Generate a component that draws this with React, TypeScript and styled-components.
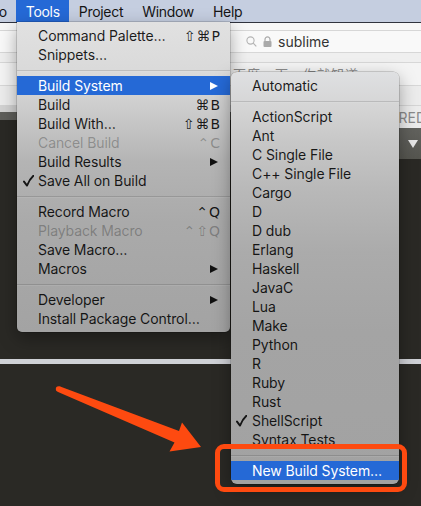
import React from "react";
import styled, { createGlobalStyle } from "styled-components";

const FONT = `Inter, "Noto Sans", "DejaVu Sans", sans-serif`;
const SYM = `"DejaVu Sans", Inter, sans-serif`;
const ORANGE = "#fe4a10";
const BLUE = "#2569d6";

const Global = createGlobalStyle`
  html, body { margin: 0; padding: 0; }
  body { background: #2a2925; font-family: ${FONT}; overflow: hidden; }
  #root { width: 421px; height: 506px; }
`;

const Screen = styled.div`
  position: relative;
  width: 421px;
  height: 506px;
  overflow: hidden;
  display: flex;
  flex-direction: column;
  background: #2a2925;
`;

/* ---------- menu bar ---------- */
const MenuBar = styled.div`
  height: 22px;
  flex: none;
  display: flex;
  align-items: stretch;
  background: #c5cee0;
  overflow: hidden;
  font-family: ${FONT};
  font-size: 14px;
  letter-spacing: -0.3px;
  color: #151515;
`;

const BarItem = styled.div<{ $active?: boolean; $clip?: boolean }>`
  display: flex;
  align-items: center;
  padding: 0 9.5px;
  margin-left: ${(p) => (p.$clip ? "-21px" : "0")};
  background: ${(p) => (p.$active ? BLUE : "transparent")};
  color: ${(p) => (p.$active ? "#fff" : "#151515")};
  white-space: nowrap;
`;

/* ---------- browser background ---------- */
const Band = styled.div<{ $h: number; $bg: string; $line?: string }>`
  flex: none;
  height: ${(p) => p.$h}px;
  background: ${(p) => p.$bg};
  border-top: 1px solid ${(p) => p.$line ?? "#d7d7d7"};
  display: flex;
  align-items: center;
  overflow: hidden;
`;

const AddressField = styled.div`
  display: flex;
  align-items: center;
  gap: 6px;
  padding-left: 246px;
  font-family: ${FONT};
  font-size: 14px;
  color: #333;
`;

const TabTitle = styled.div`
  align-self: flex-start;
  padding: 1px 0 0 233px;
  font-family: "Noto Sans CJK SC", sans-serif;
  font-size: 13px;
  color: #8c8c8c;
  white-space: nowrap;
  letter-spacing: 1px;
`;

const Workspace = styled.div`
  flex: none;
  height: 254px;
  display: grid;
  grid-template-columns: 231px 1fr;
`;

const Column = styled.div`
  display: flex;
  flex-direction: column;
  background: #2a2925;
  min-width: 0;
`;

const Block = styled.div<{ $h: number; $bg: string }>`
  flex: none;
  height: ${(p) => p.$h}px;
  background: ${(p) => p.$bg};
`;

const TitleStrip = styled.div`
  flex: none;
  height: 22px;
  display: flex;
  align-items: center;
  justify-content: flex-end;
  background: #ececec;
  border-top: 1px solid #d5d5d5;
  overflow: hidden;
  font-family: ${FONT};
  font-size: 14px;
  color: #8a8a8a;
  white-space: nowrap;
`;

const Clipped = styled.span`
  margin-right: -5px;
`;

const TabBar = styled.div`
  flex: none;
  height: 31px;
  display: flex;
  align-items: center;
  justify-content: flex-end;
  padding-right: 3px;
  background: linear-gradient(#62625e, #55554f);
`;

const DownTri = styled.span`
  width: 0;
  height: 0;
  border-left: 5px solid transparent;
  border-right: 5px solid transparent;
  border-top: 8px solid #e6e6e6;
`;

const Strip = styled.div`
  flex: none;
  height: 5px;
  background: #cfd1d6;
`;

const Editor = styled.div`
  flex: 1;
  background: #2a2925;
`;

/* ---------- menus ---------- */
const Menu = styled.div<{ $left: number; $top: number; $width: number; $bg: string; $attached?: boolean }>`
  position: absolute;
  left: ${(p) => p.$left}px;
  top: ${(p) => p.$top}px;
  width: ${(p) => p.$width}px;
  padding: 4px 0;
  border-radius: ${(p) => (p.$attached ? "0 0 5px 5px" : "6px")};
  background: ${(p) => p.$bg};
  box-shadow: 0 0 0 0.5px rgba(0, 0, 0, 0.28), 0 6px 18px rgba(0, 0, 0, 0.35);
  font-family: ${FONT};
  font-size: 14px;
  overflow: hidden;
`;

const Item = styled.div<{ $hl?: boolean; $disabled?: boolean; $pad?: number }>`
  height: 19px;
  display: grid;
  grid-template-columns: ${(p) => p.$pad ?? 21}px 1fr auto;
  align-items: center;
  padding-right: 10px;
  background: ${(p) => (p.$hl ? BLUE : "transparent")};
  color: ${(p) => (p.$hl ? "#fff" : p.$disabled ? "rgba(0,0,0,0.27)" : "rgba(0,0,0,0.88)")};
  white-space: nowrap;
  letter-spacing: -0.1px;
`;

const CheckCell = styled.span<{ $indent: number }>`
  display: flex;
  align-items: center;
  padding-left: ${(p) => p.$indent}px;
`;

const Shortcut = styled.span`
  font-family: ${SYM};
  font-size: 14px;
  letter-spacing: 1px;
  margin-right: -1px;
`;

const SubArrow = styled.span<{ $hl?: boolean }>`
  width: 0;
  height: 0;
  margin-right: 2px;
  border-top: 4.5px solid transparent;
  border-bottom: 4.5px solid transparent;
  border-left: 8px solid ${(p) => (p.$hl ? "#fff" : "#111")};
`;

const Sep = styled.div`
  height: 12px;
  display: flex;
  align-items: center;
  &::after {
    content: "";
    flex: 1;
    height: 1px;
    background: rgba(0, 0, 0, 0.13);
    box-shadow: 0 1px 0 rgba(255, 255, 255, 0.08);
  }
`;

/* ---------- annotation ---------- */
const Callout = styled.div`
  position: absolute;
  left: 215px;
  top: 444px;
  width: 182px;
  height: 38px;
  border: 5.5px solid ${ORANGE};
  border-radius: 9px;
  pointer-events: none;
`;

const Overlay = styled.svg`
  position: absolute;
  left: 0;
  top: 0;
  pointer-events: none;
`;

type Row =
  | { sep: true }
  | { label: string; key?: string; sub?: boolean; hl?: boolean; disabled?: boolean; check?: boolean };

const toolsRows: Row[] = [
  { label: "Command Palette…", key: "⇧⌘P" },
  { label: "Snippets…" },
  { sep: true },
  { label: "Build System", sub: true, hl: true },
  { label: "Build", key: "⌘B" },
  { label: "Build With…", key: "⇧⌘B" },
  { label: "Cancel Build", key: "⌃C", disabled: true },
  { label: "Build Results", sub: true },
  { label: "Save All on Build", check: true },
  { sep: true },
  { label: "Record Macro", key: "⌃Q" },
  { label: "Playback Macro", key: "⌃⇧Q", disabled: true },
  { label: "Save Macro…" },
  { label: "Macros", sub: true },
  { sep: true },
  { label: "Developer", sub: true },
  { label: "Install Package Control…" },
];

const buildRows: Row[] = [
  { label: "Automatic" },
  { sep: true },
  ...[
    "ActionScript",
    "Ant",
    "C Single File",
    "C++ Single File",
    "Cargo",
    "D",
    "D dub",
    "Erlang",
    "Haskell",
    "JavaC",
    "Lua",
    "Make",
    "Python",
    "R",
    "Ruby",
    "Rust",
  ].map((label) => ({ label })),
  { label: "ShellScript", check: true },
  { label: "Syntax Tests" },
  { sep: true },
  { label: "New Build System…", hl: true },
];

function CheckMark() {
  return (
    <svg width="11" height="12" viewBox="0 0 11 12">
      <path
        d="M1 6.6 L4 10.6 C5.6 6.6 7.6 3.4 10.4 0.8"
        fill="none"
        stroke="#151515"
        strokeWidth="1.9"
        strokeLinecap="round"
        strokeLinejoin="round"
      />
    </svg>
  );
}

function MenuRows({ rows, pad, indent }: { rows: Row[]; pad: number; indent: number }) {
  return (
    <>
      {rows.map((r, i) =>
        "sep" in r ? (
          <Sep key={i} />
        ) : (
          <Item key={i} $hl={r.hl} $disabled={r.disabled} $pad={pad}>
            <CheckCell $indent={indent}>{r.check ? <CheckMark /> : null}</CheckCell>
            <span>{r.label}</span>
            {r.sub ? <SubArrow $hl={r.hl} /> : r.key ? <Shortcut>{r.key}</Shortcut> : <span />}
          </Item>
        )
      )}
    </>
  );
}

function SearchIcon() {
  return (
    <svg width="11" height="11" viewBox="0 0 11 11">
      <circle cx="4.5" cy="4.5" r="3.6" fill="none" stroke="#b4b4b4" strokeWidth="1.1" />
      <line x1="7.2" y1="7.2" x2="10.3" y2="10.3" stroke="#b4b4b4" strokeWidth="1.2" />
    </svg>
  );
}

function LockIcon() {
  return (
    <svg width="9" height="11" viewBox="0 0 9 11">
      <path d="M2 5V3.4a2.5 2.5 0 0 1 5 0V5" fill="none" stroke="#aaa" strokeWidth="1.2" />
      <rect x="0.5" y="5" width="8" height="6" rx="1" fill="#aaa" />
    </svg>
  );
}

export default function App() {
  return (
    <Screen>
      <Global />
      <MenuBar>
        <BarItem $clip>Go</BarItem>
        <BarItem $active>Tools</BarItem>
        <BarItem>Project</BarItem>
        <BarItem>Window</BarItem>
        <BarItem>Help</BarItem>
      </MenuBar>

      <Band $h={7} $bg="#f7f7f7" $line="#30333e" />
      <Band $h={21} $bg="#f9f9f9">
        <AddressField>
          <SearchIcon />
          <LockIcon />
          <span>sublime</span>
        </AddressField>
      </Band>
      <Band $h={9} $bg="#efefef" />
      <Band $h={22} $bg="#f4f4f4">
        <TabTitle>百度一下，你就知道</TabTitle>
      </Band>
      <Band $h={19} $bg="#ececec" />

      <Workspace>
        <Column>
          <Block $h={7} $bg="#d2d2d2" />
          <Block $h={8} $bg="#5e5e5a" />
        </Column>
        <Column>
          <TitleStrip>
            <Clipped>UNREGISTERED</Clipped>
          </TitleStrip>
          <TabBar>
            <DownTri />
          </TabBar>
        </Column>
      </Workspace>
      <Strip />
      <Editor />

      <Menu
        $left={17}
        $top={22}
        $width={213}
        $attached
        $bg="linear-gradient(to bottom, #e1e1e1 0px, #d8d8d8 60px, #c6c6c6 100px, #b4b4b4 140px, #aaaaaa 200px, #a3a3a3 310px)"
      >
        <MenuRows rows={toolsRows} pad={21} indent={6} />
      </Menu>

      <Menu
        $left={231}
        $top={72}
        $width={168}
        $bg="linear-gradient(to bottom, #dfe0e2 0px, #d3d3d3 40px, #c7c7c7 70px, #b8b8b8 120px, #ababab 180px, #a4a4a4 260px, #a2a2a2 412px)"
      >
        <MenuRows rows={buildRows} pad={21} indent={5} />
      </Menu>

      <Callout />
      <Overlay width="421" height="506" viewBox="0 0 421 506">
        <circle cx="58.5" cy="389" r="2.7" fill={ORANGE} />
        <polygon
          points="59.5,386.3 179,431 182,422.5 201,447 169.5,451.5 174.5,442.5 57.5,391.7"
          fill={ORANGE}
        />
      </Overlay>
    </Screen>
  );
}
